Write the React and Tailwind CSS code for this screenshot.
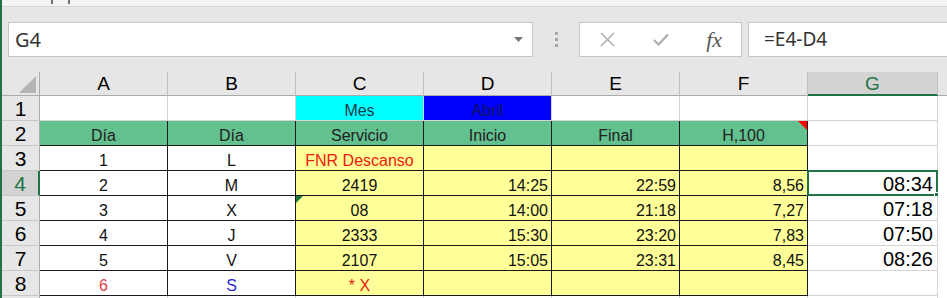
import React from "react";

const BLACK = "border-[#1a1a1a]";
const GRID = "border-[#d4d4d4]";

function Cell({ t = "", bg = "bg-white", tc = "text-[#111]", align = "center", br = GRID, bb = GRID, size = "text-[16px]", pr = "pr-[3px]", children }) {
  const j = align === "center" ? "justify-center" : align === "right" ? `justify-end ${pr}` : "justify-start pl-[3px]";
  return (
    <div className={`relative flex items-end pb-[1px] overflow-visible border-r border-b ${br} ${bb} ${bg} ${j}`}>
      <span className={`${size} leading-none whitespace-nowrap ${tc}`}>{t}</span>
      {children}
    </div>
  );
}

function RowHead({ n, sel }) {
  return (
    <div
      className={`flex items-center justify-center border-b border-[#c8c8c8] ${
        sel ? "bg-[#d3d3d3] text-[#217346] border-r-2 border-r-[#217346]" : "bg-[#e6e6e6] text-black border-r border-r-[#ababab]"
      }`}
    >
      {n ? <span className="text-[21px] leading-none">{n}</span> : null}
    </div>
  );
}

export default function App() {
  const cols = ["A", "B", "C", "D", "E", "F"];
  const yellow = "bg-[#ffff99]";
  const green = "bg-[#63c08f]";

  const dataRows = [
    { n: 3, a: "1", b: "L", c: "FNR Descanso", cRed: true, d: "", e: "", f: "", g: "" },
    { n: 4, a: "2", b: "M", c: "2419", d: "14:25", e: "22:59", f: "8,56", g: "08:34", sel: true },
    { n: 5, a: "3", b: "X", c: "08", d: "14:00", e: "21:18", f: "7,27", g: "07:18", tri: true },
    { n: 6, a: "4", b: "J", c: "2333", d: "15:30", e: "23:20", f: "7,83", g: "07:50" },
    { n: 7, a: "5", b: "V", c: "2107", d: "15:05", e: "23:31", f: "8,45", g: "08:26" },
    { n: 8, a: "6", b: "S", c: "* X", cRed: true, d: "", e: "", f: "", g: "", aRed: true, bBlue: true },
  ];

  return (
    <div className="w-[947px] h-[298px] overflow-hidden bg-white border-l-2 border-[#217346] font-['Liberation_Sans',Arial,sans-serif]">
      {/* top strip */}
      <div className="relative h-[7px] bg-[#f3f3f3] border-b border-[#d4d4d4]">
        <div className="absolute left-[49px] top-0 w-[2px] h-[4px] bg-[#707070]" />
        <div className="absolute left-[66px] top-0 w-[2px] h-[4px] bg-[#707070]" />
      </div>
      {/* formula bar */}
      <div className="h-[65px] bg-[#e6e6e6] flex items-start pt-[15px] font-['Noto_Sans',sans-serif]">
        <div className="ml-[6px] w-[525px] h-[35px] bg-white border border-[#c6c6c6] flex items-center justify-between pl-[6px] pr-[9px]">
          <span className="text-[20px] leading-none text-[#333]">G4</span>
          <svg width="9" height="5" viewBox="0 0 9 5"><path d="M0 0 L9 0 L4.5 5 Z" fill="#777" /></svg>
        </div>
        <div className="w-[46px] h-[35px] flex flex-col items-center justify-center gap-[3px]">
          <div className="w-[3px] h-[3px] bg-[#a6a6a6]" />
          <div className="w-[3px] h-[3px] bg-[#a6a6a6]" />
          <div className="w-[3px] h-[3px] bg-[#a6a6a6]" />
        </div>
        <div className="w-[163px] h-[35px] bg-white border border-[#c6c6c6] flex items-center">
          <div className="w-[54px] flex justify-center pl-[2px]">
            <svg width="15" height="15" viewBox="0 0 15 15"><path d="M1 1 L14 14 M14 1 L1 14" stroke="#b0b0b0" strokeWidth="1.6" /></svg>
          </div>
          <div className="w-[54px] flex justify-center">
            <svg width="16" height="13" viewBox="0 0 16 13"><path d="M1 7 L5.5 11.5 L15 1.5" stroke="#b0b0b0" strokeWidth="2.4" fill="none" /></svg>
          </div>
          <div className="w-[54px] flex justify-center">
            <span className="font-['Liberation_Serif',serif] italic text-[22px] leading-none text-[#595959]">fx</span>
          </div>
        </div>
        <div className="ml-[6px] flex-1 h-[35px] bg-white border border-r-0 border-[#c6c6c6] flex items-center pl-[15px]">
          <span className="text-[19px] leading-none text-[#333]">=E4-D4</span>
        </div>
      </div>

      {/* grid */}
      <div className="grid grid-cols-[38px_128px_128px_128px_128px_128px_128px_130px_1fr] grid-rows-[24px_repeat(9,25px)]">
        {/* header row */}
        <div className="relative bg-[#e6e6e6] border-r border-b border-[#ababab]">
          <svg className="absolute right-[3px] bottom-[2px]" width="17" height="17" viewBox="0 0 17 17"><path d="M17 0 L17 17 L0 17 Z" fill="#b4b4b4" /></svg>
        </div>
        {cols.map((c) => (
          <div key={c} className="bg-[#e6e6e6] border-r border-b border-r-[#c0c0c0] border-b-[#ababab] flex items-center justify-center">
            <span className="text-[19px] leading-none text-black">{c}</span>
          </div>
        ))}
        <div className="bg-[#d3d3d3] border-r border-r-[#c0c0c0] border-b-2 border-b-[#217346] flex items-center justify-center">
          <span className="text-[19px] leading-none text-[#217346]">G</span>
        </div>
        <div className="bg-[#e6e6e6] border-b border-[#ababab]" />

        {/* row 1 */}
        <RowHead n={1} />
        <Cell bb={BLACK} />
        <Cell bb={BLACK} />
        <Cell t="Mes" bg="bg-[#00ffff]" tc="text-[#1a3a4a]" bb={BLACK} />
        <Cell t="Abril" bg="bg-[#0000ff]" tc="text-[#101060]" bb={BLACK} />
        <Cell bb={BLACK} />
        <Cell bb={BLACK} />
        <Cell />
        <Cell br="border-transparent" />

        {/* row 2 */}
        <RowHead n={2} />
        <Cell t="Día" bg={green} tc="text-[#222]" br={BLACK} bb={BLACK} />
        <Cell t="Día" bg={green} tc="text-[#222]" br={BLACK} bb={BLACK} />
        <Cell t="Servicio" bg={green} tc="text-[#222]" br={BLACK} bb={BLACK} />
        <Cell t="Inicio" bg={green} tc="text-[#222]" br={BLACK} bb={BLACK} />
        <Cell t="Final" bg={green} tc="text-[#222]" br={BLACK} bb={BLACK} />
        <Cell t="H,100" bg={green} tc="text-[#222]" br={BLACK} bb={BLACK}>
          <svg className="absolute right-0 top-0" width="9" height="9" viewBox="0 0 9 9"><path d="M0 0 L9 0 L9 9 Z" fill="#ff0000" /></svg>
        </Cell>
        <Cell />
        <Cell br="border-transparent" />

        {dataRows.map((r) => (
          <React.Fragment key={r.n}>
            <RowHead n={r.n} sel={r.sel} />
            <Cell t={r.a} tc={r.aRed ? "text-[#e0404c]" : "text-[#111]"} br={BLACK} bb={BLACK} />
            <Cell t={r.b} tc={r.bBlue ? "text-[#2a2ad0]" : "text-[#111]"} br={BLACK} bb={BLACK} />
            <Cell t={r.c} bg={yellow} tc={r.cRed ? "text-[#f0200f]" : "text-[#111]"} br={BLACK} bb={BLACK}>
              {r.tri && (
                <svg className="absolute left-0 top-0" width="7" height="7" viewBox="0 0 7 7"><path d="M0 0 L7 0 L0 7 Z" fill="#1e7a3c" /></svg>
              )}
            </Cell>
            <Cell t={r.d} bg={yellow} align="right" br={BLACK} bb={BLACK} />
            <Cell t={r.e} bg={yellow} align="right" br={BLACK} bb={BLACK} />
            <Cell t={r.f} bg={yellow} align="right" br={BLACK} bb={BLACK} />
            <Cell t={r.g} align="right" size="text-[20px]" pr="pr-[4px]" tc="text-black">
              {r.sel && (
                <>
                  <div className="absolute -left-[1px] -top-[1px] -right-[1px] -bottom-[1px] border-2 border-[#217346] pointer-events-none" />
                  <div className="absolute -right-[4px] -bottom-[4px] w-[7px] h-[7px] bg-[#217346] border border-white" />
                </>
              )}
            </Cell>
            <Cell br="border-transparent" />
          </React.Fragment>
        ))}

        {/* row 9 (partially visible) */}
        <RowHead />
        <Cell />
        <Cell />
        <Cell />
        <Cell />
        <Cell />
        <Cell />
        <Cell />
        <Cell br="border-transparent" />
      </div>
    </div>
  );
}
